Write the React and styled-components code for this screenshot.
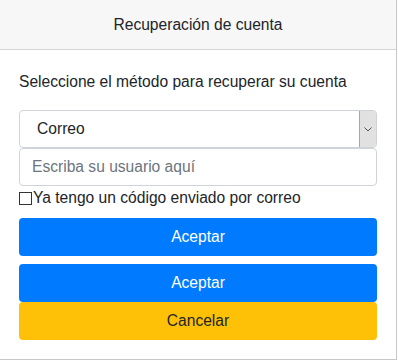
import React from 'react';
import styled, { createGlobalStyle } from 'styled-components';

const Global = createGlobalStyle`
  html, body { margin: 0; padding: 0; background: #fff; }
  body {
    font-family: "Liberation Sans", Arial, sans-serif;
    font-size: 15.6px;
    line-height: 1.5;
    color: #212529;
  }
  * { box-sizing: border-box; }
`;

const Card = styled.div`
  width: 397px;
  height: 360px;
  background: #fff;
  border-right: 1px solid #c8c8c8;
  border-bottom: 1px solid #c8c8c8;
  display: flex;
  flex-direction: column;
`;

const Header = styled.div`
  height: 50px;
  background: #f7f7f7;
  border-bottom: 1px solid #d6d6d6;
  display: flex;
  align-items: center;
  justify-content: center;
`;

const Body = styled.div`
  padding: 20px 19px 0 19px;
  display: flex;
  flex-direction: column;
`;

const Lead = styled.p`
  margin: 0 0 16px 0;
  line-height: 24px;
`;

const SelectBox = styled.div`
  height: 38px;
  border: 1px solid #ced4da;
  border-radius: 4px;
  display: flex;
  align-items: stretch;
  overflow: hidden;
`;

const SelectValue = styled.span`
  flex: 1;
  display: flex;
  align-items: center;
  padding-left: 17px;
`;

const SelectArrow = styled.span`
  width: 17px;
  background: #e1e1e1;
  border-left: 1px solid #a7a7a7;
  display: flex;
  align-items: center;
  justify-content: center;
`;

const Input = styled.div`
  height: 38px;
  border: 1px solid #ced4da;
  border-radius: 4px;
  display: flex;
  align-items: center;
  padding-left: 12px;
  color: #6c757d;
`;

const CheckRow = styled.label`
  display: flex;
  align-items: center;
  height: 24px;
  margin-bottom: 8px;
`;

const Box = styled.span`
  width: 13px;
  height: 13px;
  border: 1px solid #333;
  background: #fff;
  margin-right: 1px;
`;

const Button = styled.div`
  height: 38px;
  border-radius: 4px;
  display: flex;
  align-items: center;
  justify-content: center;
  background: ${p => (p.$warning ? '#ffc107' : '#007bff')};
  color: ${p => (p.$warning ? '#212529' : '#fff')};
  margin-bottom: ${p => p.$gap || 0}px;
`;

export default function App() {
  return (
    <>
      <Global />
      <Card>
        <Header>Recuperación de cuenta</Header>
        <Body>
          <Lead>Seleccione el método para recuperar su cuenta</Lead>
          <SelectBox>
            <SelectValue>Correo</SelectValue>
            <SelectArrow>
              <svg width="8" height="5" viewBox="0 0 8 5">
                <path d="M0.5 0.5 L4 4 L7.5 0.5" fill="none" stroke="#555" strokeWidth="1" />
              </svg>
            </SelectArrow>
          </SelectBox>
          <Input>Escriba su usuario aquí</Input>
          <CheckRow>
            <Box />
            Ya tengo un código enviado por correo
          </CheckRow>
          <Button $gap={8}>Aceptar</Button>
          <Button>Aceptar</Button>
          <Button $warning>Cancelar</Button>
        </Body>
      </Card>
    </>
  );
}
